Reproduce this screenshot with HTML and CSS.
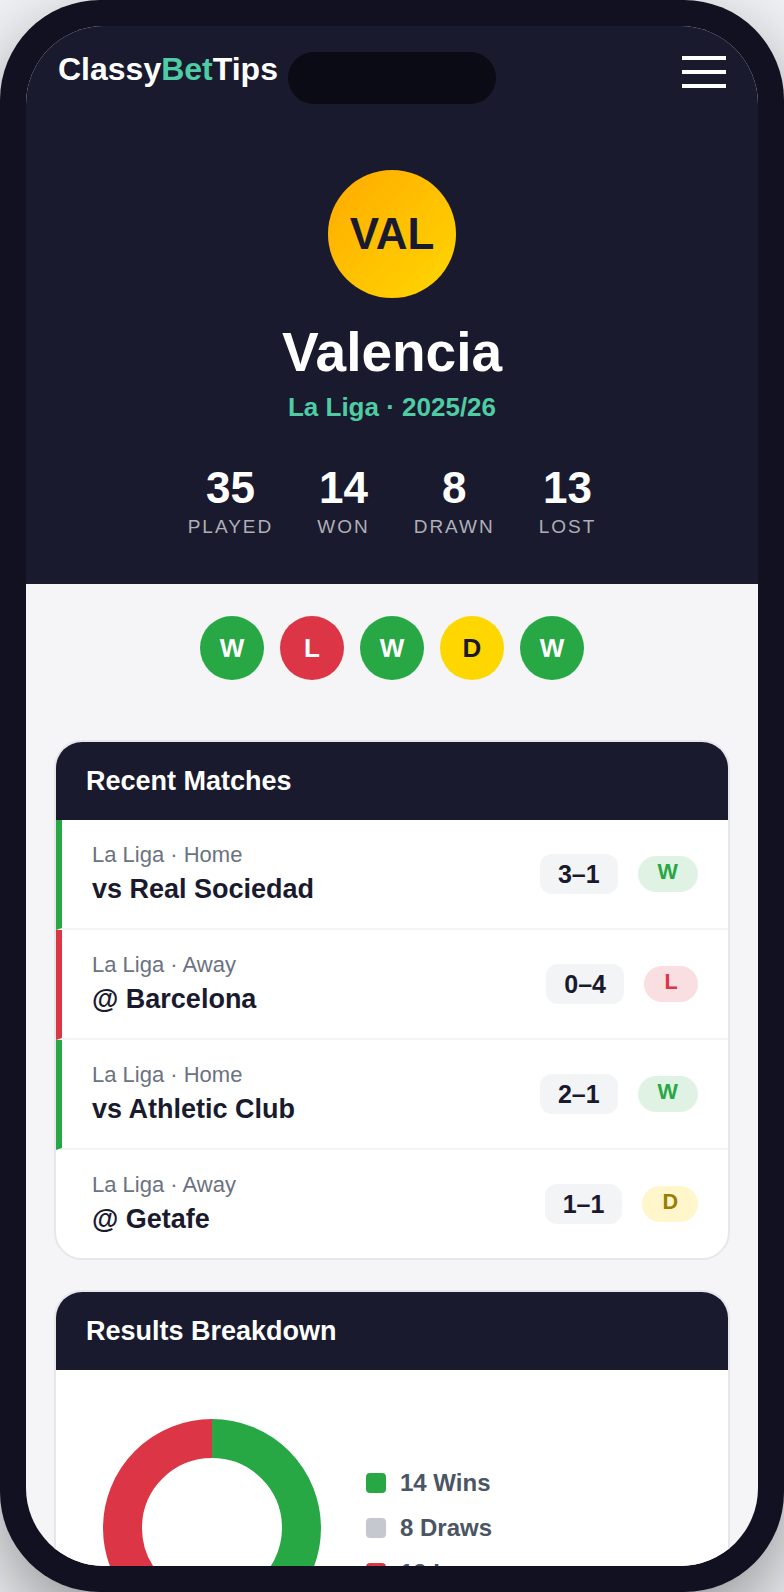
FILE: index.html
```html
<!DOCTYPE html>
<html lang="en">

<head>
    <meta charset="utf-8">
    <meta name="viewport" content="width=device-width, initial-scale=1">
    <title>Valencia - ClassyBetTips</title>
    <link rel="stylesheet" href="styles.css">
</head>

<body>
    <div class="phone">
        <div class="notch"></div>
        <div class="screen">
            <section class="hero">
                <nav class="topbar">
                    <div class="logo">Classy<span>Bet</span>Tips</div>
                    <div class="burger"><i></i><i></i><i></i></div>
                </nav>
                <div class="crest">VAL</div>
                <h1>Valencia</h1>
                <p class="league">La Liga · 2025/26</p>
                <div class="stats">
                    <div class="stat"><b>35</b><span>Played</span></div>
                    <div class="stat"><b>14</b><span>Won</span></div>
                    <div class="stat"><b>8</b><span>Drawn</span></div>
                    <div class="stat"><b>13</b><span>Lost</span></div>
                </div>
            </section>

            <div class="form">
                <div class="dot win">W</div>
                <div class="dot loss">L</div>
                <div class="dot win">W</div>
                <div class="dot draw">D</div>
                <div class="dot win">W</div>
            </div>

            <main class="content">
                <section class="card">
                    <h2>Recent Matches</h2>
                    <div class="match is-win">
                        <div class="match-info">
                            <div class="meta">La Liga · Home</div>
                            <div class="name">vs Real Sociedad</div>
                        </div>
                        <div class="score">3–1</div>
                        <div class="badge win">W</div>
                    </div>
                    <div class="match is-loss">
                        <div class="match-info">
                            <div class="meta">La Liga · Away</div>
                            <div class="name">@ Barcelona</div>
                        </div>
                        <div class="score">0–4</div>
                        <div class="badge loss">L</div>
                    </div>
                    <div class="match is-win">
                        <div class="match-info">
                            <div class="meta">La Liga · Home</div>
                            <div class="name">vs Athletic Club</div>
                        </div>
                        <div class="score">2–1</div>
                        <div class="badge win">W</div>
                    </div>
                    <div class="match">
                        <div class="match-info">
                            <div class="meta">La Liga · Away</div>
                            <div class="name">@ Getafe</div>
                        </div>
                        <div class="score">1–1</div>
                        <div class="badge draw">D</div>
                    </div>
                </section>

                <section class="card">
                    <h2>Results Breakdown</h2>
                    <div class="breakdown">
                        <svg class="donut" viewBox="0 0 218 218" width="218" height="218">
                            <g fill="none" stroke-width="39" transform="rotate(-90 109 109)">
                                <circle cx="109" cy="109" r="89.5" pathLength="35" stroke="#28a745" stroke-dasharray="14 21"></circle>
                                <circle cx="109" cy="109" r="89.5" pathLength="35" stroke="#c5c8ce" stroke-dasharray="8 27" stroke-dashoffset="-14"></circle>
                                <circle cx="109" cy="109" r="89.5" pathLength="35" stroke="#dc3545" stroke-dasharray="13 22" stroke-dashoffset="-22"></circle>
                            </g>
                        </svg>
                        <ul class="legend">
                            <li><i class="swatch green"></i>14 Wins</li>
                            <li><i class="swatch grey"></i>8 Draws</li>
                            <li><i class="swatch red"></i>13 Losses</li>
                        </ul>
                    </div>
                </section>
            </main>
        </div>
    </div>
</body>

</html>
```

FILE: styles.css
```css
* {
    box-sizing: border-box;
}

body {
    margin: 0;
    height: 100vh;
    overflow: hidden;
    background-color: #f0f2f5;
    font-family: "Liberation Sans", Arial, sans-serif;
}

.phone {
    position: relative;
    height: 1592px;
    padding: 26px;
    background-color: #111121;
    border-radius: 100px;
    box-shadow: 0 30px 80px rgba(0, 0, 0, 0.4);
}

/* sits on top of the screen, the logo runs right up to it */
.notch {
    position: absolute;
    top: 52px;
    left: 288px;
    width: 208px;
    height: 52px;
    border-radius: 26px;
    background-color: #0b0b16;
    z-index: 2;
}

.screen {
    height: 1540px;
    overflow: hidden;
    border-radius: 78px;
    background-color: #f5f5f8;
}

.hero {
    height: 558px;
    background-color: #1a1a2e;
    color: white;
    display: flex;
    flex-direction: column;
    align-items: center;
}

.topbar {
    width: 100%;
    display: flex;
    justify-content: space-between;
    padding: 25px 32px 0;
    height: 144px;
}

.logo {
    font-size: 32px;
    font-weight: bold;
    line-height: 37px;
}

.logo span {
    color: #4ecca3;
}

.burger {
    display: flex;
    flex-direction: column;
    gap: 10px;
    padding: 5px 0 0;
}

.burger i {
    display: block;
    width: 44px;
    height: 4px;
    background-color: white;
}

.crest {
    width: 128px;
    height: 128px;
    border-radius: 50%;
    background: linear-gradient(135deg, #ffaa00, #ffd700);
    color: #1a1a2e;
    font-size: 44px;
    font-weight: bold;
    display: flex;
    align-items: center;
    justify-content: center;
}

h1 {
    margin: 22px 0 0;
    font-size: 55px;
    line-height: 64px;
}

.league {
    margin: 8px 0 0;
    color: #4ecca3;
    font-size: 26px;
    font-weight: bold;
    line-height: 30px;
}

.stats {
    display: flex;
    gap: 44px;
    margin-top: 40px;
}

.stat {
    display: flex;
    flex-direction: column;
    align-items: center;
}

.stat b {
    font-size: 44px;
    line-height: 52px;
}

.stat span {
    margin-top: 2px;
    color: #afafb6;
    font-size: 19px;
    line-height: 22px;
    letter-spacing: 2px;
    text-transform: uppercase;
}

.form {
    display: flex;
    justify-content: center;
    gap: 16px;
    padding: 32px 0 60px;
}

.dot {
    width: 64px;
    height: 64px;
    border-radius: 50%;
    color: white;
    font-size: 26px;
    font-weight: bold;
    display: flex;
    align-items: center;
    justify-content: center;
}

.dot.win {
    background-color: #28a745;
}

.dot.loss {
    background-color: #dc3545;
}

.dot.draw {
    background-color: #ffd700;
    color: #1a1a2e;
}

.content {
    padding: 0 28px;
}

.card {
    background-color: white;
    border: 2px solid #e5e7eb;
    border-radius: 28px;
    overflow: hidden;
    margin-bottom: 30px;
}

.card h2 {
    margin: 0;
    height: 78px;
    padding: 0 30px;
    background-color: #1a1a2e;
    color: white;
    font-size: 27px;
    line-height: 78px;
}

.match {
    display: flex;
    align-items: center;
    padding: 23px 30px;
    border-left: 6px solid transparent;
    border-bottom: 2px solid #f3f4f6;
}

.match:last-child {
    border-bottom: none;
}

.match.is-win {
    border-left-color: #28a745;
}

.match.is-loss {
    border-left-color: #dc3545;
}

.match-info {
    flex: 1;
}

.meta {
    margin-top: -1px;
    color: #6b7280;
    font-size: 22px;
    line-height: 26px;
}

.name {
    margin-top: 5px;
    color: #1a1a2e;
    font-size: 27px;
    font-weight: bold;
    line-height: 32px;
}

.score {
    height: 40px;
    padding: 0 18px;
    border-radius: 12px;
    background-color: #f3f4f6;
    color: #1a1a2e;
    font-size: 25px;
    font-weight: bold;
    line-height: 40px;
}

.badge {
    height: 36px;
    min-width: 54px;
    margin-left: 20px;
    padding: 0 20px;
    border-radius: 18px;
    font-size: 21.6px;
    font-weight: bold;
    line-height: 32px;
    text-align: center;
}

.badge.win {
    background-color: #e0f2e4;
    color: #28a745;
}

.badge.loss {
    background-color: #fadfe2;
    color: #dc3545;
}

.badge.draw {
    background-color: #fff6cc;
    color: #9a7d00;
}

.breakdown {
    display: flex;
    align-items: center;
    gap: 45px;
    padding: 49px 48px 49px 47px;
}

.donut {
    display: block;
    flex-shrink: 0;
}

.legend {
    margin: 0;
    padding: 0;
    list-style: none;
    display: flex;
    flex-direction: column;
    gap: 17px;
    color: #4b5563;
    font-size: 24px;
    font-weight: bold;
    line-height: 28px;
}

.legend li {
    display: flex;
    align-items: center;
    gap: 14px;
}

.swatch {
    width: 20px;
    height: 20px;
    border-radius: 4px;
}

.swatch.green {
    background-color: #28a745;
}

.swatch.grey {
    background-color: #c5c8ce;
}

.swatch.red {
    background-color: #dc3545;
}
```
